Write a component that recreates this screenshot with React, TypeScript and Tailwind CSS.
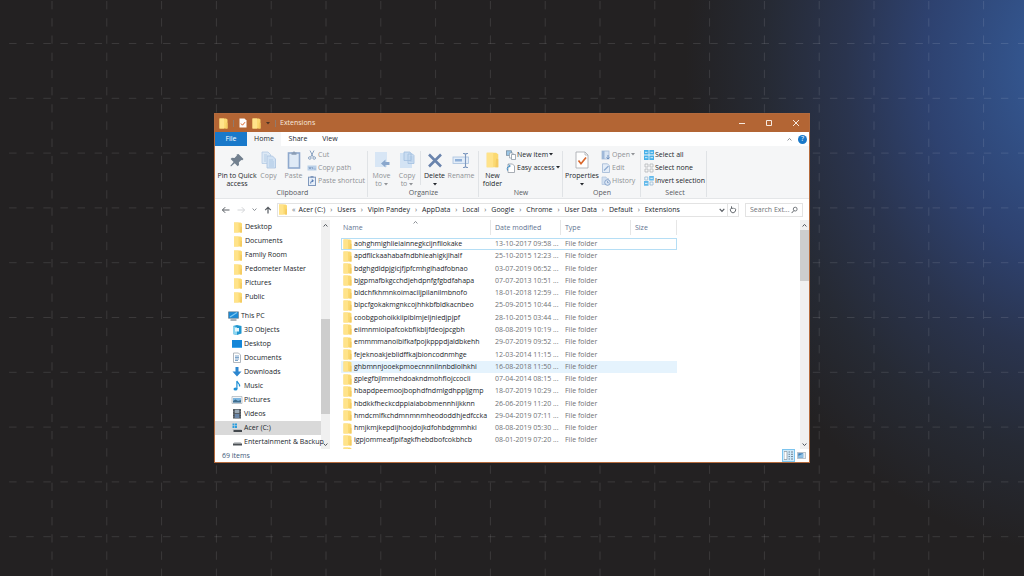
import { useState, type ReactNode } from 'react';

// Explorer window on a dashed-grid backdrop

interface FileRow {
  name: string;
  date: string;
}

const FILES: FileRow[] = [
  { name: 'aohghmighlieiainnegkcijnfilokake', date: '13-10-2017 09:58 ...' },
  { name: 'apdfllckaahabafndbhieahigkjlhalf', date: '25-10-2015 12:23 ...' },
  { name: 'bdghgdldpjgicjfjpfcmhgihadfobnao', date: '03-07-2019 06:52 ...' },
  { name: 'bjgpmafbkgcchdjehdpnfgfgbdfahapa', date: '07-07-2013 10:51 ...' },
  { name: 'bldchfkhmnkoimaciljpilanilmbnofo', date: '18-01-2018 12:59 ...' },
  { name: 'blpcfgokakmgnkcojhhkbfbldkacnbeo', date: '25-09-2015 10:44 ...' },
  { name: 'coobgpohoikkiipiblmjeljniedjpjpf', date: '28-10-2015 03:44 ...' },
  { name: 'eiimnmioipafcokbfikbljfdeojpcgbh', date: '08-08-2019 10:19 ...' },
  { name: 'emmmmanoibifkafpojkpppdjaldbkehh', date: '29-07-2019 09:52 ...' },
  { name: 'fejeknoakjeblidffkajbioncodnmhge', date: '12-03-2014 11:15 ...' },
  { name: 'ghbmnnjooekpmoecnnnilnnbdlolhkhi', date: '16-08-2018 11:50 ...' },
  { name: 'gplegfbjlmmehdoakndmohflojccocli', date: '07-04-2014 08:15 ...' },
  { name: 'hbapdpeemoojbophdfndmlgdhppljgmp', date: '18-07-2019 10:29 ...' },
  { name: 'hbdkkfheckcdppiaiabobmennhijkknn', date: '26-06-2019 11:20 ...' },
  { name: 'hmdcmlfkchdmnmnmheododdhjedfccka', date: '29-04-2019 07:11 ...' },
  { name: 'hmjkmjkepdijhoojdojkdfohbdgmmhki', date: '08-08-2019 05:30 ...' },
  { name: 'igpjommeafjpifagkfhebdbofcokbhcb', date: '08-01-2019 07:20 ...' },
];

const QUICK = ['Desktop', 'Documents', 'Family Room', 'Pedometer Master', 'Pictures', 'Public'];

const CRUMBS = ['Acer (C:)', 'Users', 'Vipin Pandey', 'AppData', 'Local', 'Google', 'Chrome', 'User Data', 'Default', 'Extensions'];

const FolderIcon = ({ className = 'w-[9px] h-[11px]' }: { className?: string }) => (
  <svg viewBox="0 0 9 11" className={`${className} shrink-0`} aria-hidden="true">
    <path d="M0.5 0.5h6.5l1.5 1v9h-8z" fill="#fbd971" />
    <path d="M0.5 0.5h4.5v10h-4.5z" fill="#ffe38a" />
    <path d="M7 4.500l1.500 0.5v5.500h-2z" fill="#f4cb62" />
  </svg>
);

const PinIcon = () => (
  <svg viewBox="0 0 16 18" className="w-4 h-[18px]" aria-hidden="true">
    <path d="M9.5 3l5 5-1.200 1.200-1-.3-2.400 2.400.1 2.600-1.300 1.300-3-3-3.700 3.200-.6-.6 3.200-3.700-3-3 1.300-1.300 2.600.1 2.400-2.400-.3-1z" fill="#72808f" />
  </svg>
);

const CopyIcon = () => (
  <svg viewBox="0 0 16 18" className="w-4 h-[18px]" aria-hidden="true">
    <path d="M1 1h6l2.500 2.500v9h-8.500z" fill="#dce8f5" stroke="#b5cbe4" strokeWidth=".8" />
    <path d="M6 5h5.500l3 3v9h-8.500z" fill="#d0e1f3" stroke="#a9c3e0" strokeWidth=".8" />
    <path d="M8 9h4M8 11h5M8 13h5M8 15h5M3 4h3M3 6h2M3 8h2M3 10h2" stroke="#a5c1e0" strokeWidth=".7" />
  </svg>
);

const PasteIcon = () => (
  <svg viewBox="0 0 14 18" className="w-[14px] h-[18px]" aria-hidden="true">
    <rect x="1.500" y="2" width="11" height="15" fill="#dfeaf6" stroke="#8fa9cd" strokeWidth="1.600" />
    <path d="M4.500 1.500h1.500l.4-1h1.200l.4 1h1.500v2.200h-5z" fill="#8b9db5" />
  </svg>
);

const MoveIcon = () => (
  <svg viewBox="0 0 16 18" className="w-4 h-[18px]" aria-hidden="true">
    <rect x="1" y="1" width="12" height="15" fill="#d8e6f5" />
    <path d="M7 12.500l4.500-4v2.500h4v3h-4v2.500z" fill="#8aa7cc" />
  </svg>
);

const CopyToIcon = () => (
  <svg viewBox="0 0 16 18" className="w-4 h-[18px]" aria-hidden="true">
    <rect x="1" y="2" width="12" height="15" fill="#d3e3f4" />
    <path d="M5 1h6l1 1.500v7h-7zM9 3h4.500l1.500 1.500v8h-6z" fill="#c9dcf1" stroke="#a2bfdf" strokeWidth=".8" />
    <path d="M10.500 6h3M10.500 8h3M10.500 10h3" stroke="#a2bfdf" strokeWidth=".7" />
  </svg>
);

const DeleteIcon = () => (
  <svg viewBox="0 0 16 18" className="w-4 h-[18px]" aria-hidden="true">
    <path d="M2 3.500l12 12M14 3.500l-12 12" stroke="#6a84ad" strokeWidth="2.600" />
  </svg>
);

const RenameIcon = () => (
  <svg viewBox="0 0 18 18" className="w-[18px] h-[18px]" aria-hidden="true">
    <rect x="1" y="6" width="15.500" height="6.500" fill="#e3edf8" stroke="#a9c1de" strokeWidth=".8" />
    <rect x="3" y="8" width="7" height="2.500" fill="#8fb0d8" />
    <path d="M11 2.500h1.500l1 1 1-1h1.500M13.500 3.500v12M11 16.500h1.500l1-1 1 1h1.500" stroke="#7d98bf" strokeWidth="1.100" fill="none" />
  </svg>
);

const PropertiesIcon = () => (
  <svg viewBox="0 0 14 18" className="w-[14px] h-[18px]" aria-hidden="true">
    <path d="M1 1h9l3 3v13h-12z" fill="#fefefe" stroke="#a3a7ac" strokeWidth=".8" />
    <path d="M10 1v3h3" fill="none" stroke="#a3a7ac" strokeWidth=".7" />
    <path d="M3.500 9.500l2.500 3.200 5-6.200" fill="none" stroke="#d9662b" strokeWidth="1.700" />
  </svg>
);

const CutIcon = () => (
  <svg viewBox="0 0 10 10" className="size-[10px]" aria-hidden="true">
    <path d="M3 .5l3.300 6.500M7 .5l-3.300 6.500" stroke="#8ba3c2" strokeWidth="1" />
    <circle cx="2.800" cy="8" r="1.300" fill="none" stroke="#8ba3c2" />
    <circle cx="7.200" cy="8" r="1.300" fill="none" stroke="#8ba3c2" />
  </svg>
);

const PathIcon = () => (
  <svg viewBox="0 0 10 10" className="size-[10px]" aria-hidden="true">
    <rect x=".5" y="2.500" width="9" height="5" fill="#b9cfe8" />
    <path d="M2 4l1 2 1-2M5 4l1 2M7.500 6h1" stroke="#7693ba" strokeWidth=".8" fill="none" />
  </svg>
);

const ShortcutIcon = () => (
  <svg viewBox="0 0 10 10" className="size-[10px]" aria-hidden="true">
    <rect x="1.500" y="1.200" width="7" height="8.300" fill="#e6eef8" stroke="#8099bd" />
    <path d="M3.500 0h3v1.800h-3z" fill="#8099bd" />
    <path d="M3.700 7.500c0-2 .8-2.800 2.300-2.800M4.800 3.500l1.600 1.200-1.300 1.400" stroke="#3e69a8" strokeWidth=".9" fill="none" />
  </svg>
);

const NewItemIcon = () => (
  <svg viewBox="0 0 10 10" className="size-[10px]" aria-hidden="true">
    <rect x=".5" y=".8" width="5" height="4.500" fill="#9cc7e6" stroke="#6d8296" strokeWidth=".7" />
    <path d="M3.500 3h3.500v5h-3.500z" fill="#fff" stroke="#8c99a6" strokeWidth=".7" />
    <path d="M5.500 4.500h4v5h-4z" fill="#fff" stroke="#7f8c99" strokeWidth=".7" />
  </svg>
);

const EasyAccessIcon = () => (
  <svg viewBox="0 0 10 10" className="size-[10px]" aria-hidden="true">
    <path d="M2 1h4.500l2 2v6.500h-6.500z" fill="#fff" stroke="#939ba3" strokeWidth=".8" />
    <path d="M1.500 7.500c-.8-3 .3-4.500 2.500-4.500M2.800 1.500l1.500 1.500-1.500 1.500" fill="none" stroke="#3a8ac4" strokeWidth="1" />
  </svg>
);

const OpenIcon = () => (
  <svg viewBox="0 0 10 10" className="size-[10px]" aria-hidden="true">
    <rect x="1" y="1" width="7" height="8" fill="#d9e5f3" stroke="#a7bcd6" strokeWidth=".8" />
    <path d="M1 1h2.500v8h-2.500z" fill="#9fb8d8" />
    <path d="M7 5v4M5.500 7.500l1.500 1.500 1.500-1.500" stroke="#6f91bf" fill="none" />
  </svg>
);

const EditIcon = () => (
  <svg viewBox="0 0 10 10" className="size-[10px]" aria-hidden="true">
    <path d="M1.500 .8h5l2 2v6.700h-7z" fill="#e4edf8" stroke="#9fb6d4" strokeWidth=".8" />
    <path d="M3 7.500l4.500-4.500" stroke="#8eabd1" strokeWidth="1.200" />
  </svg>
);

const HistoryIcon = () => (
  <svg viewBox="0 0 10 10" className="size-[10px]" aria-hidden="true">
    <path d="M1 1h4l1 1.500h1.500v6h-6.500z" fill="#d3e0f0" stroke="#afc3dd" strokeWidth=".7" />
    <circle cx="6.500" cy="6.500" r="2.800" fill="#dbe6f4" stroke="#7f9dc6" strokeWidth=".9" />
    <path d="M6.500 5v1.700h1.300" stroke="#6b8bb8" strokeWidth=".7" fill="none" />
  </svg>
);

const SelectAllIcon = () => (
  <svg viewBox="0 0 10 10" className="size-[10px]" aria-hidden="true">
    <path d="M0 0h4.600v4.600h-4.600zM5.400 0h4.600v4.600h-4.600zM0 5.400h4.600v4.600h-4.600zM5.400 5.400h4.600v4.600h-4.600z" fill="#48b0e8" />
    <path d="M1 2.300h2.500M6.500 2.300h2.500M1 7.700h2.500M6.500 7.700h2.500" stroke="#d5effb" strokeWidth="1" />
  </svg>
);

const SelectNoneIcon = () => (
  <svg viewBox="0 0 10 10" className="size-[10px]" aria-hidden="true">
    <path d="M1 1h3v3h-3zM6 1h3v3h-3zM1 6h3v3h-3zM6 6h3v3h-3z" fill="#f6f6f6" stroke="#b4b7ba" strokeWidth=".8" />
  </svg>
);

const InvertIcon = () => (
  <svg viewBox="0 0 10 10" className="size-[10px]" aria-hidden="true">
    <path d="M0 5h4.500v4.800h-4.500zM5.200 0h4.600v4.500h-4.600z" fill="#62b9ea" />
    <path d="M.8 1h3v3h-3zM6 6h3v3h-3z" fill="#f2f7fb" stroke="#9bb9d0" strokeWidth=".8" />
    <path d="M1 7.400h2.500M6.300 2.300h2.500" stroke="#e0f2fb" />
  </svg>
);

const DEVICES: { label: string; icon: ReactNode }[] = [
  {
    label: '3D Objects',
    icon: (
      <>
        <path d="M2 2l4-1 4.500 1v7.500l-4.500 1.500-4-1z" fill="#2196cf" />
        <path d="M2 2l4 1.200v7.800l-4-1z" fill="#8cd5f0" />
        <path d="M4 4h4v3.500h-4z" fill="#e6f6fc" />
      </>
    ),
  },
  {
    label: 'Desktop',
    icon: (
      <>
        <path d="M1 2h10v7h-10z" fill="#1486d8" />
        <path d="M1 9h10v1h-10z" fill="#44a9ea" />
      </>
    ),
  },
  {
    label: 'Documents',
    icon: (
      <>
        <path d="M2.500 1h5l2 2v7.500h-7z" fill="#fff" stroke="#9da5ad" strokeWidth=".8" />
        <path d="M4 4h4M4 5.500h4M4 7h4M4 8.500h3" stroke="#5c8ebd" strokeWidth=".8" />
      </>
    ),
  },
  { label: 'Downloads', icon: <path d="M4.500 1h3v4.500h3l-4.500 5-4.500-5h3z" fill="#2c86cf" /> },
  {
    label: 'Music',
    icon: (
      <>
        <ellipse cx="4.500" cy="9" rx="2" ry="1.600" fill="#1e8fd5" />
        <path d="M5.900 9v-8c.5 2 3.300 2.500 2.600 5.500" fill="none" stroke="#1e8fd5" strokeWidth="1.200" />
      </>
    ),
  },
  {
    label: 'Pictures',
    icon: (
      <>
        <path d="M1 2.500h10v7h-10z" fill="#f4f6f8" stroke="#a8b0b8" strokeWidth=".7" />
        <path d="M2 4h8v4.500h-8z" fill="#7db6e0" />
        <path d="M2 7l2.500-1.500 2.500 1.500 3-1v2.500h-8z" fill="#3f6d8e" />
      </>
    ),
  },
  {
    label: 'Videos',
    icon: (
      <>
        <path d="M2 1h8v9.500h-8z" fill="#3e4246" />
        <path d="M3.700 1.500h4.600v3.800h-4.600z" fill="#9ba9b5" />
        <path d="M3.700 6h4.600v4h-4.600z" fill="#6a86a8" />
        <path d="M2.800 1.500v9M9.200 1.500v9" stroke="#cfd3d6" strokeWidth=".6" strokeDasharray=".8 .8" />
      </>
    ),
  },
  {
    label: 'Acer (C:)',
    icon: (
      <>
        <path d="M1.500 1.500h2v2h-2zM4 1.500h2v2h-2zM1.500 4h2v2h-2zM4 4h2v2h-2z" fill="#2c9ede" />
        <path d="M2.500 7h7l1.500 1h-10z" fill="#b9bdc1" />
        <path d="M2.500 8h8.500v2h-8.500z" fill="#43484d" />
      </>
    ),
  },
  {
    label: 'Entertainment & Backup',
    icon: (
      <>
        <path d="M3.500 6h6l1.500 1.500h-9z" fill="#c6c9cc" />
        <path d="M2 7.500h9v2h-9z" fill="#4b5055" />
      </>
    ),
  },
];

const Caret = ({ up = false, className = 'size-[5px]' }: { up?: boolean; className?: string }) => (
  <svg viewBox="0 0 6 6" className={`${className} shrink-0`} aria-hidden="true">
    <path d={up ? 'M.7 4.200l2.300-2.500 2.300 2.500' : 'M.7 1.800l2.300 2.500 2.300-2.500'} fill="none" stroke="currentColor" strokeWidth="1.200" />
  </svg>
);

const Drop = () => (
  <svg viewBox="0 0 4 3" className="w-1 h-[3px] shrink-0" aria-hidden="true">
    <path d="M0 0h4l-2 2.500z" fill="currentColor" />
  </svg>
);

function BigButton({ icon, lines, drop, muted, className }: { icon: ReactNode; lines: string[]; drop?: boolean; muted?: boolean; className: string }) {
  return (
    <button className={`flex flex-col items-center shrink-0 ${muted ? 'text-[#8f9296]' : 'text-[#22262b]'} ${className}`}>
      {icon}
      <span className="mt-[3px] flex flex-col items-center whitespace-nowrap">
        {lines.map((line, i) => (
          <span key={line} className="flex items-center gap-[2px]">
            {line}
            {drop && i === lines.length - 1 && i > 0 && <Drop />}
          </span>
        ))}
      </span>
      {drop && lines.length === 1 && <span className="mt-[3px]"><Drop /></span>}
    </button>
  );
}

function SmallButton({ icon, label, drop, muted }: { icon: ReactNode; label: string; drop?: boolean; muted?: boolean }) {
  return (
    <button className={`flex items-center gap-px h-[13px] whitespace-nowrap ${muted ? 'text-[#8f9296]' : 'text-[#22262b]'}`}>
      {icon}
      {label}
      {drop && <Drop />}
    </button>
  );
}

function Group({ label, className, children }: { label: string; className: string; children: ReactNode }) {
  return (
    <section aria-label={label} className={`flex flex-col justify-between shrink-0 border-r border-[#e0e3e6] ${className}`}>
      <div className="flex items-start">{children}</div>
      <div className="text-center text-[#55595e]">{label}</div>
    </section>
  );
}

function Backdrop() {
  return (
    <svg className="absolute inset-0 size-full" aria-hidden="true">
      <g stroke="#ffffff" strokeOpacity=".11" strokeWidth="1">
        {Array.from({ length: 40 }, (_, i) => (
          <line key={`v${i}`} x1={52 + i * 54.8} x2={52 + i * 54.8} y1="1" y2="100%" strokeDasharray="8.400 8.800" />
        ))}
        {Array.from({ length: 24 }, (_, i) => (
          <line key={`h${i}`} x1="-8" x2="100%" y1={43.5 + i * 54.8} y2={43.5 + i * 54.8} strokeDasharray="7.500 9.600" />
        ))}
      </g>
    </svg>
  );
}

export default function App() {
  const [selected, setSelected] = useState(10);

  return (
    <main className="relative min-h-screen flex items-center justify-center overflow-hidden bg-[#232122] bg-[radial-gradient(ellipse_400px_490px_at_106%_11%,#355a9b_0%,#33548c_16%,#2e4270_40%,#2a344e_60%,#262a34_80%,#232122_100%)] font-['Open_Sans','Noto_Sans',sans-serif] text-[7px] leading-[8px] text-[#22262b]">
      <Backdrop />

      <div className="relative w-full max-w-[596px] border border-[#b46a3c] bg-white">
        {/* Title bar */}
        <header className="flex items-center h-[18px] bg-[#b36534] text-[#f7e9df]">
          <div className="flex items-center gap-[5px] pl-1">
            <FolderIcon />
            <span className="w-px h-[7px] bg-[#927a6c]" />
            <svg viewBox="0 0 8 10" className="w-2 h-[10px]" aria-hidden="true">
              <path d="M.5 .5h5l2 2v7h-7z" fill="#fff" />
              <path d="M2 5.500l1.500 1.700 2.500-3" fill="none" stroke="#d9662b" />
            </svg>
            <FolderIcon />
            <span className="text-[#4d3426]"><Drop /></span>
            <span className="w-px h-[7px] bg-[#927a6c]" />
          </div>
          <h1 className="pl-1">Extensions</h1>
          <div className="ml-auto flex h-full">
            <button aria-label="Minimize" className="w-[27px] flex items-center justify-center">
              <svg viewBox="0 0 8 8" className="size-2"><path d="M1 4.500h6" stroke="currentColor" /></svg>
            </button>
            <button aria-label="Maximize" className="w-[27px] flex items-center justify-center">
              <svg viewBox="0 0 8 8" className="size-2"><path d="M1.500 1.500h5v5h-5z" fill="none" stroke="currentColor" /></svg>
            </button>
            <button aria-label="Close" className="w-[27px] flex items-center justify-center">
              <svg viewBox="0 0 8 8" className="size-2"><path d="M1 1l6 6M7 1l-6 6" stroke="currentColor" /></svg>
            </button>
          </div>
        </header>

        {/* Ribbon tabs */}
        <nav className="flex items-stretch h-[14px]">
          <button className="w-8 bg-[#1979ca] text-white">File</button>
          <button className="w-[34px] bg-[#f5f6f7]">Home</button>
          <button className="w-[34px]">Share</button>
          <button className="w-[30px]">View</button>
          <div className="ml-auto flex items-center gap-[6px] pr-[2px]">
            <button aria-label="Collapse ribbon" className="text-[#8c9197]"><Caret up /></button>
            <button aria-label="Help" className="size-[9px] rounded-full bg-[#1979ca] text-white flex items-center justify-center">?</button>
          </div>
        </nav>

        {/* Ribbon */}
        <div className="flex h-[53px] pt-[5px] pb-px bg-[#f5f6f7] border-b border-[#e4e6e8] overflow-hidden">
          <Group label="Clipboard" className="w-[153px] pl-[3px]">
            <BigButton className="w-[38px]" icon={<PinIcon />} lines={['Pin to Quick', 'access']} />
            <BigButton className="w-[25px]" muted icon={<CopyIcon />} lines={['Copy']} />
            <BigButton className="w-[25px]" muted icon={<PasteIcon />} lines={['Paste']} />
            <div className="pl-px -mt-[3px]">
              <SmallButton muted icon={<CutIcon />} label="Cut" />
              <SmallButton muted icon={<PathIcon />} label="Copy path" />
              <SmallButton muted icon={<ShortcutIcon />} label="Paste shortcut" />
            </div>
          </Group>
          <Group label="Organize" className="w-[111px] pl-px">
            <BigButton className="w-[25px]" muted drop icon={<MoveIcon />} lines={['Move', 'to']} />
            <BigButton className="w-[26px]" muted drop icon={<CopyToIcon />} lines={['Copy', 'to']} />
            <span className="w-px h-[34px] bg-[#e0e3e6]" />
            <BigButton className="w-[27px]" drop icon={<DeleteIcon />} lines={['Delete']} />
            <BigButton className="w-[26px]" muted icon={<RenameIcon />} lines={['Rename']} />
          </Group>
          <Group label="New" className="w-[84px] pl-px">
            <BigButton className="w-[25px]" icon={<FolderIcon className="w-[13px] h-[18px]" />} lines={['New', 'folder']} />
            <div className="pl-px -mt-[3px]">
              <SmallButton drop icon={<NewItemIcon />} label="New item" />
              <SmallButton drop icon={<EasyAccessIcon />} label="Easy access" />
            </div>
          </Group>
          <Group label="Open" className="w-[78px] pl-px">
            <BigButton className="w-[36px]" drop icon={<PropertiesIcon />} lines={['Properties']} />
            <div className="pl-px -mt-[3px]">
              <SmallButton muted drop icon={<OpenIcon />} label="Open" />
              <SmallButton muted icon={<EditIcon />} label="Edit" />
              <SmallButton muted icon={<HistoryIcon />} label="History" />
            </div>
          </Group>
          <Group label="Select" className="w-[66px] pl-[3px]">
            <div className="-mt-[3px]">
              <SmallButton icon={<SelectAllIcon />} label="Select all" />
              <SmallButton icon={<SelectNoneIcon />} label="Select none" />
              <SmallButton icon={<InvertIcon />} label="Invert selection" />
            </div>
          </Group>
        </div>

        {/* Address bar */}
        <div className="flex items-center h-[21px] pl-[6px] pr-[6px]">
          <div className="flex items-center justify-between w-[51px] mr-[5px] text-[#565b61]">
            <button aria-label="Back">
              <svg viewBox="0 0 9 8" className="w-[9px] h-2"><path d="M8.500 4h-7M4.200 1.200l-2.800 2.800 2.800 2.800" fill="none" stroke="currentColor" /></svg>
            </button>
            <button aria-label="Forward" className="text-[#d3d5d8]">
              <svg viewBox="0 0 9 8" className="w-[9px] h-2"><path d="M.5 4h7M4.800 1.200l2.800 2.800-2.800 2.800" fill="none" stroke="currentColor" /></svg>
            </button>
            <button aria-label="Recent locations" className="text-[#8c9197]"><Caret /></button>
            <button aria-label="Up">
              <svg viewBox="0 0 8 8" className="size-2"><path d="M4 7.500v-6M1.200 4.200l2.800-2.800 2.800 2.800" fill="none" stroke="currentColor" strokeWidth="1.200" /></svg>
            </button>
          </div>
          <div className="flex-1 flex items-center h-[14px] border border-[#e3e3e3] min-w-0">
            <FolderIcon className="w-[10px] h-[11px]" />
            <span className="pl-1 pr-[3px] text-[#6b7076]">«</span>
            <ol className="flex items-center whitespace-nowrap">
              {CRUMBS.map((crumb, i) => (
                <li key={crumb} className="flex items-center">
                  {i > 0 && <span className="w-3 text-center text-[#565b61]">›</span>}
                  <a href={`#${crumb}`}>{crumb}</a>
                </li>
              ))}
            </ol>
            <button aria-label="Previous locations" className="ml-auto mr-[2px] text-[#565b61]"><Caret className="size-[6px]" /></button>
            <button aria-label="Refresh" className="h-full w-[11px] border-l border-[#e3e3e3] flex items-center justify-center">
              <svg viewBox="0 0 8 8" className="size-2"><path d="M5.500 2a2.600 2.600 0 1 1-3 0M2.500 .3v2h2.200" fill="none" stroke="#565b61" strokeWidth=".9" /></svg>
            </button>
          </div>
          <label className="flex items-center ml-[6px] w-[58px] h-[14px] border border-[#e3e3e3] pl-1 pr-1">
            <input aria-label="Search Extensions" placeholder="Search Ext..." className="w-full min-w-0 outline-none placeholder:text-[#6f7378]" />
            <svg viewBox="0 0 8 8" className="w-[7px] h-2 shrink-0" aria-hidden="true">
              <circle cx="4.800" cy="3" r="2.200" fill="none" stroke="#565b61" strokeWidth=".9" />
              <path d="M3.300 4.700l-2.600 2.800" stroke="#565b61" strokeWidth="1.100" />
            </svg>
          </label>
        </div>

        <div className="flex h-[229px]">
          {/* Navigation pane */}
          <aside className="relative z-10 w-[106px] shrink-0 whitespace-nowrap">
            <ul>
              {QUICK.map(label => (
                <li key={label} className="flex items-center gap-[2px] h-[14px] pl-[18px]">
                  <FolderIcon className="w-[10px] h-[11px]" />
                  {label}
                </li>
              ))}
            </ul>
            <div className="flex items-center gap-[2px] h-[14px] mt-[5px] pl-[13px]">
              <svg viewBox="0 0 11 10" className="w-[11px] h-[10px] shrink-0" aria-hidden="true">
                <path d="M.5 .8h10v6.500h-10z" fill="#1b8ad6" stroke="#6c7983" strokeWidth=".6" />
                <path d="M2 6l7-4.500" stroke="#7cc8f2" strokeWidth="1.200" />
                <path d="M2.500 9h6" stroke="#5d6a74" />
              </svg>
              This PC
            </div>
            <ul>
              {DEVICES.map(({ label, icon }) => (
                <li key={label} className={`flex items-center gap-px h-[14px] pl-[16px] ${label === 'Acer (C:)' ? 'bg-[#d9d9d9]' : ''}`}>
                  <svg viewBox="0 0 12 12" className="size-3 shrink-0" aria-hidden="true">{icon}</svg>
                  {label}
                </li>
              ))}
            </ul>
          </aside>
          <div className="w-[9px] shrink-0 flex flex-col items-center bg-[#f0f0f0] text-[#565b61]">
            <div className="h-[10px] flex items-center"><Caret up /></div>
            <div className="mt-[89px] w-full h-[95px] bg-[#cdcdcd]" />
            <div className="mt-auto h-[10px] flex items-center"><Caret /></div>
          </div>

          {/* File list */}
          <div className="flex-1 min-w-0 overflow-hidden pl-[11px]">
            <table className="table-fixed w-[336px] h-[239px] border-collapse whitespace-nowrap">
              <colgroup>
                <col className="w-[150px]" />
                <col className="w-[70px]" />
                <col className="w-[70px]" />
                <col />
              </colgroup>
              <thead>
                <tr className="h-[18px] text-left align-top text-[#5f7390]">
                  <th className="relative p-0 font-normal">
                    <span className="absolute left-[72px] top-0 text-[#8c9197]"><Caret up /></span>
                    <div className="h-[15px] leading-[15px] pl-[2px] border-r border-[#e6e6e6]">Name</div>
                  </th>
                  <th className="p-0 font-normal"><div className="h-[15px] leading-[15px] pl-1 border-r border-[#e6e6e6]">Date modified</div></th>
                  <th className="p-0 font-normal"><div className="h-[15px] leading-[15px] pl-1 border-r border-[#e6e6e6]">Type</div></th>
                  <th className="p-0 font-normal"><div className="h-[15px] leading-[15px] pl-1 border-r border-[#e6e6e6]">Size</div></th>
                </tr>
              </thead>
              <tbody>
                {FILES.map((file, i) => (
                  <tr
                    key={file.name}
                    onClick={() => setSelected(i)}
                    className={`${i === selected ? 'bg-[#e5f3fd]' : ''} ${i === 0 ? 'outline outline-1 -outline-offset-1 outline-[#b5def5]' : ''}`}
                  >
                    <td className="p-0">
                      <div className="flex items-center gap-[2px] pl-[2px]">
                        <FolderIcon />
                        {file.name}
                      </div>
                    </td>
                    <td className="p-0 pl-1 text-[#707275]">{file.date}</td>
                    <td className="p-0 pl-1 text-[#707275]">File folder</td>
                    <td className="p-0" />
                  </tr>
                ))}
                <tr>
                  <td className="p-0 pl-[2px]"><FolderIcon /></td>
                  <td className="p-0" colSpan={3} />
                </tr>
              </tbody>
            </table>
          </div>
          <div className="w-[9px] shrink-0 flex flex-col items-center bg-[#f0f0f0] text-[#565b61]">
            <div className="h-[10px] flex items-center"><Caret up /></div>
            <div className="w-full h-[51px] bg-[#cdcdcd]" />
            <div className="mt-auto h-[10px] flex items-center"><Caret /></div>
          </div>
        </div>

        {/* Status bar */}
        <footer className="flex items-center h-[13px] pl-[7px] pr-[2px] text-[#3d5878]">
          69 items
          <button aria-label="Details view" className="ml-auto w-[13px] h-[13px] flex items-center justify-center border border-[#7cc4ee] bg-[#cfeafa]">
            <svg viewBox="0 0 9 9" className="size-[9px]"><path d="M0 .5h3v8h-3z" fill="#fff" stroke="#87919a" strokeWidth=".7" /><path d="M4.500 1h1.500M7 1h2M4.500 3.300h1.500M7 3.300h2M4.500 5.600h1.500M7 5.600h2M4.500 8h1.500M7 8h2" stroke="#66788a" strokeWidth=".9" /></svg>
          </button>
          <button aria-label="Large icons view" className="w-3 flex items-center justify-center">
            <svg viewBox="0 0 9 7" className="w-[9px] h-[7px]"><path d="M.4 .4h8.200v6.200h-8.200z" fill="#e8eef3" stroke="#9aa6b0" strokeWidth=".7" /><path d="M1.200 1.200h5v4.600h-5z" fill="#3c7fb8" /><path d="M1.200 4l5-2.500v4.300h-5z" fill="#8fc0e4" /></svg>
          </button>
        </footer>
      </div>
    </main>
  );
}
